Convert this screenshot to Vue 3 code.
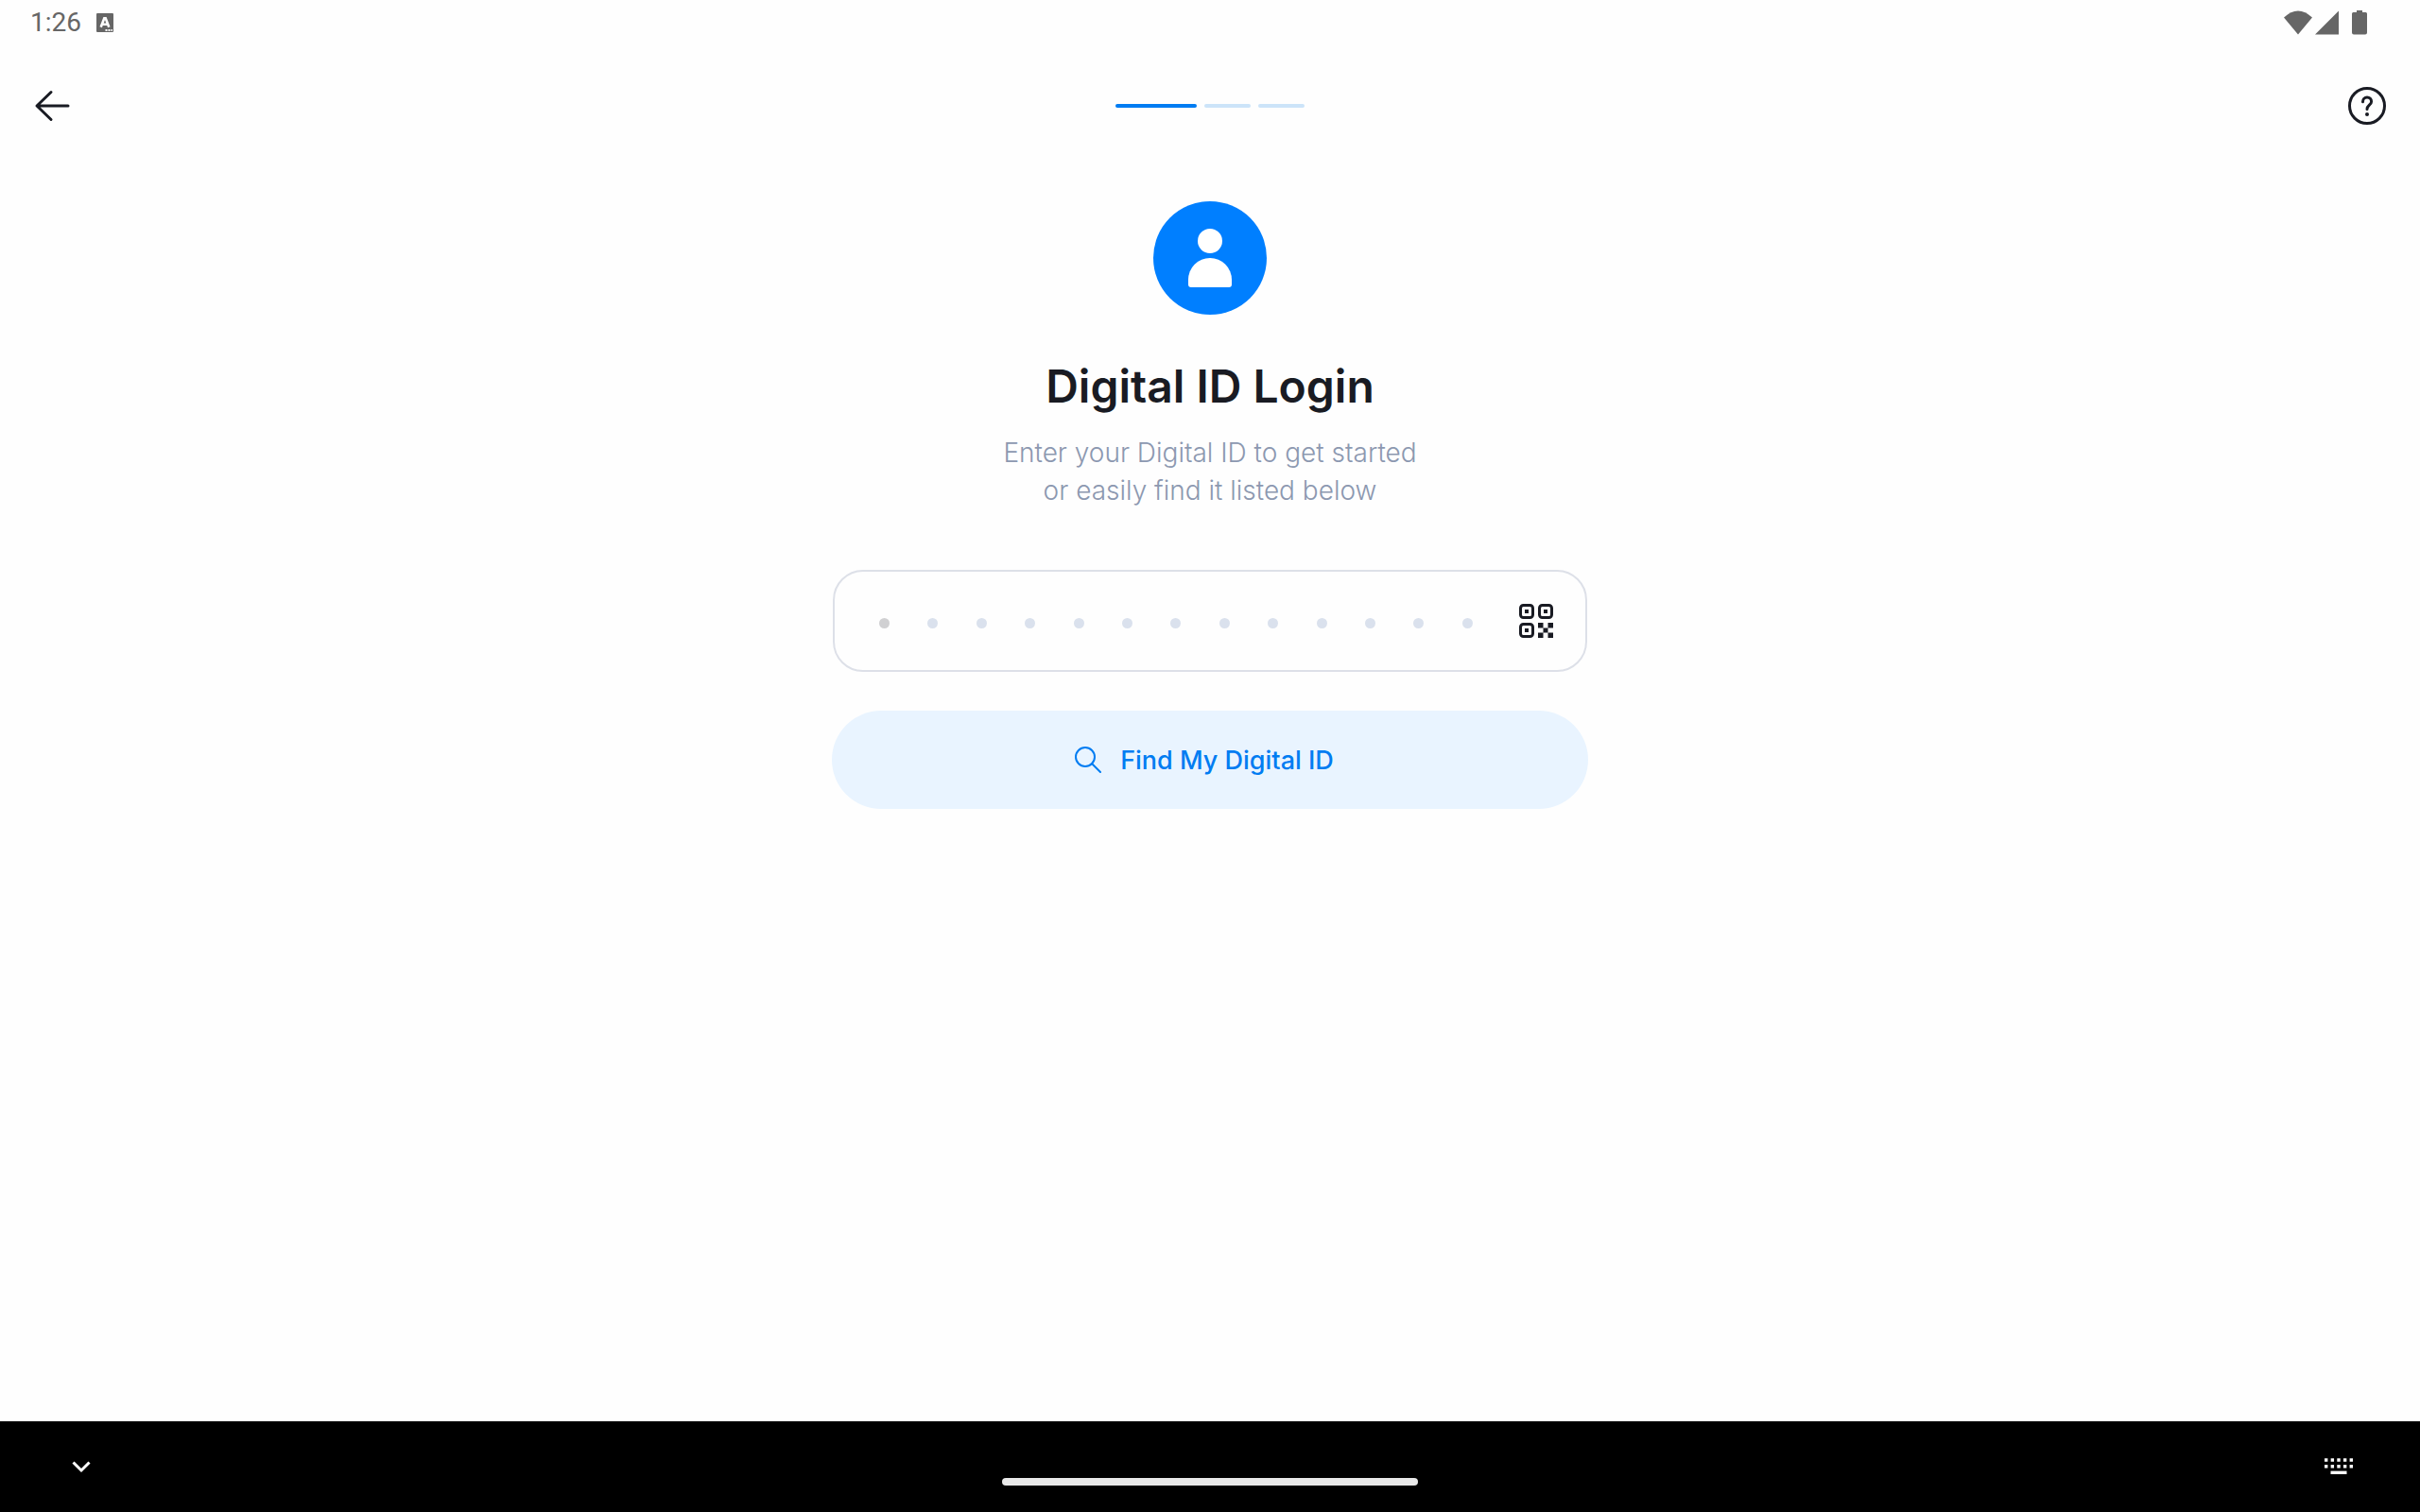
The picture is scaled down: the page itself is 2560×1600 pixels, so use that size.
<template>
  <div class="screen">
    <div class="status">
      <span class="time">1:26</span>
      <svg class="app-icon" viewBox="0 0 18 20">
        <rect width="18" height="20" rx="1" fill="#666" />
        <path d="M4.700 14.800 8.300 5.200h1.400l3.600 9.600M6.300 11.800h5.400" fill="none" stroke="#fefefe" stroke-width="2.600" />
        <path d="M9.500 17h2v2h-2zM12.500 17h2v2h-2zM15.500 17h1.500v2h-1.500z" fill="#fefefe" />
      </svg>
      <svg class="system-icons" viewBox="0 0 88 26">
        <path d="M0 7.500Q15-6.500 30 7.500L15 25.500Z" />
        <path d="M33 25.500 58 .5v25Z" />
        <path d="M77 0h6v2h3.500q1.500 0 1.500 1.500v20q0 2-2 2H74q-2 0-2-2v-20Q72 2 73.500 2H77Z" />
      </svg>
    </div>

    <header class="header">
      <button class="icon-button" type="button" aria-label="Back">
        <svg class="back" viewBox="0 0 40 40">
          <path d="M36 20H4M18 5.500 3 20l15 14.500" />
        </svg>
      </button>
      <div class="steps">
        <span v-for="n in 3" :key="n" class="step" :class="{ active: n === step }"></span>
      </div>
      <button class="icon-button" type="button" aria-label="Help">
        <svg class="help" viewBox="0 0 40 40">
          <circle cx="20" cy="20" r="18.500" stroke-width="3" />
          <path d="M15.500 15.700c0-3 2-4.700 4.500-4.700s4.600 1.700 4.600 4.400c0 3.600-4.600 4-4.600 8" stroke-width="3" />
          <circle class="help-dot" cx="20" cy="29" r="2" />
        </svg>
      </button>
    </header>

    <main class="content">
      <svg class="avatar" viewBox="0 0 120 120">
        <circle cx="60" cy="60" r="60" fill="#007fff" />
        <circle cx="60" cy="42" r="13" fill="#fff" />
        <path d="M37 83a23 23 0 0 1 46 0v5q0 3-3 3H40q-3 0-3-3Z" fill="#fff" />
      </svg>
      <h1 class="title">Digital ID Login</h1>
      <p class="hint">Enter your Digital ID to get started<br />or easily find it listed below</p>

      <form class="form" @submit.prevent>
        <div class="field">
          <div class="entry">
            <input v-model="digitalId" class="input" type="text" :maxlength="idLength" aria-label="Digital ID" />
            <div v-if="!digitalId" class="dots">
              <span v-for="n in idLength" :key="n" class="dot"></span>
            </div>
          </div>
          <button class="icon-button" type="button" aria-label="Scan QR code">
            <svg class="qr" viewBox="0 0 36 36">
              <rect x="1.500" y="1.500" width="13" height="13" rx="3" />
              <rect x="21.500" y="1.500" width="13" height="13" rx="3" />
              <rect x="1.500" y="21.500" width="13" height="13" rx="3" />
              <path d="M6 6h4v4H6zM26 6h4v4h-4zM6 26h4v4H6zM20 20h5.500v5.500H20zM30.500 20H36v5.500h-5.500zM25.500 25.500h5v5h-5zM20 30.500h5.500V36H20zM30.500 30.500H36V36h-5.500z" />
            </svg>
          </button>
        </div>
        <button class="find" type="button">
          <svg class="search" viewBox="0 0 28 28">
            <circle cx="11" cy="11" r="10" />
            <path d="m18 18 9 9" />
          </svg>
          Find My Digital ID
        </button>
      </form>
    </main>

    <nav class="navbar">
      <button class="icon-button" type="button" aria-label="Hide keyboard">
        <svg class="chevron" viewBox="0 0 30 18">
          <path d="m6.500 4.500 8.500 8.500 8.500-8.500" />
        </svg>
      </button>
      <span class="home"></span>
      <button class="icon-button" type="button" aria-label="Switch keyboard">
        <svg class="keyboard" viewBox="0 0 30 18">
          <path d="M0 2h30M0 8.700h30" stroke-width="3.400" stroke-dasharray="3.400 3.250" />
          <path d="M6.500 15.300h17" stroke-width="3.400" />
        </svg>
      </button>
    </nav>
  </div>
</template>

<script setup>
import {ref} from "vue";

const step = ref(1);
const idLength = 13;
const digitalId = ref('');
</script>

<style>
body {
  background-color: #fefefe;
}
</style>

<style scoped>
.screen {
  display: flex;
  flex-direction: column;
  min-height: 100vh;
  font-family: Inter, "Liberation Sans", sans-serif;
  color: #191b23;
}

.screen svg {
  display: block;
}

.icon-button {
  padding: 0;
  border: 0;
  background: none;
  cursor: pointer;
}

.status {
  display: flex;
  align-items: center;
  height: 48px;
  padding: 0 56px 0 32px;
}

.time {
  margin-right: 16px;
  color: #666;
  font-family: Roboto, sans-serif;
  font-size: 28px;
  line-height: 32px;
}

.app-icon {
  width: 18px;
  height: 20px;
}

.system-icons {
  width: 88px;
  height: 26px;
  margin-left: auto;
  fill: #666;
}

.header {
  display: flex;
  align-items: center;
  justify-content: space-between;
  height: 128px;
  padding: 0 36px;
}

.back,
.help {
  width: 40px;
  height: 40px;
  fill: none;
  stroke: #191b23;
  stroke-linecap: round;
  stroke-linejoin: round;
}

.back {
  stroke-width: 3;
}

.help-dot {
  fill: #191b23;
  stroke: none;
}

.steps {
  display: flex;
  gap: 8px;
}

.step {
  width: 49px;
  height: 4px;
  border-radius: 2px;
  background-color: #cce4f9;
}

.step.active {
  width: 86px;
  background-color: #007cf2;
}

.content {
  display: flex;
  flex: 1;
  flex-direction: column;
  align-items: center;
  padding-top: 37px;
}

.avatar {
  width: 120px;
  height: 120px;
}

.title {
  margin: 46px 0 20px;
  font-size: 48px;
  font-weight: 600;
  line-height: 60px;
}

.hint {
  margin: 0 0 64px;
  color: #8c98b0;
  font-size: 28px;
  font-weight: 300;
  line-height: 40px;
  text-align: center;
}

.form {
  display: flex;
  flex-direction: column;
  gap: 41px;
  width: 100%;
  max-width: 800px;
}

.field {
  display: flex;
  align-items: center;
  gap: 49px;
  box-sizing: border-box;
  height: 108px;
  margin: 0 1px;
  padding: 0 34px 0 47px;
  border: 2px solid #dde0e8;
  border-radius: 32px;
}

/* dots sit in the same cell as the input */
.entry {
  display: grid;
  flex: 1;
  align-items: center;
}

.input,
.dots {
  grid-area: 1 / 1;
}

.input {
  width: 100%;
  height: 64px;
  padding: 0;
  border: 0;
  outline: 0;
  background: none;
  color: inherit;
  font-family: inherit;
  font-size: 28px;
}

.dots {
  display: flex;
  justify-content: space-between;
  padding-top: 4px;
  pointer-events: none;
}

.dot {
  width: 11px;
  height: 11px;
  border-radius: 50%;
  background-color: #dae1ed;
}

.dot:first-child {
  background-color: #d0d0d2;
}

.qr {
  width: 36px;
  height: 36px;
  fill: #191b23;
}

.qr rect {
  fill: none;
  stroke: #191b23;
  stroke-width: 3;
}

.find {
  display: flex;
  align-items: center;
  justify-content: center;
  gap: 20px;
  height: 104px;
  padding: 0 12px 0 0;
  border: 0;
  border-radius: 52px;
  background-color: #e9f4ff;
  color: #007cf2;
  font-family: inherit;
  font-size: 27px;
  font-weight: 500;
  cursor: pointer;
}

.search {
  width: 28px;
  height: 28px;
  fill: none;
  stroke: #007cf2;
  stroke-width: 2;
  stroke-linecap: round;
}

.navbar {
  display: flex;
  align-items: center;
  justify-content: space-between;
  height: 96px;
  padding: 0 71px;
  background-color: #000;
}

.chevron,
.keyboard {
  width: 30px;
  height: 18px;
  fill: none;
  stroke: #fff;
}

.chevron {
  stroke-width: 3;
}

.home {
  align-self: flex-end;
  width: 440px;
  height: 8px;
  margin-bottom: 28px;
  border-radius: 4px;
  background-color: #e8e8e8;
}
</style>
